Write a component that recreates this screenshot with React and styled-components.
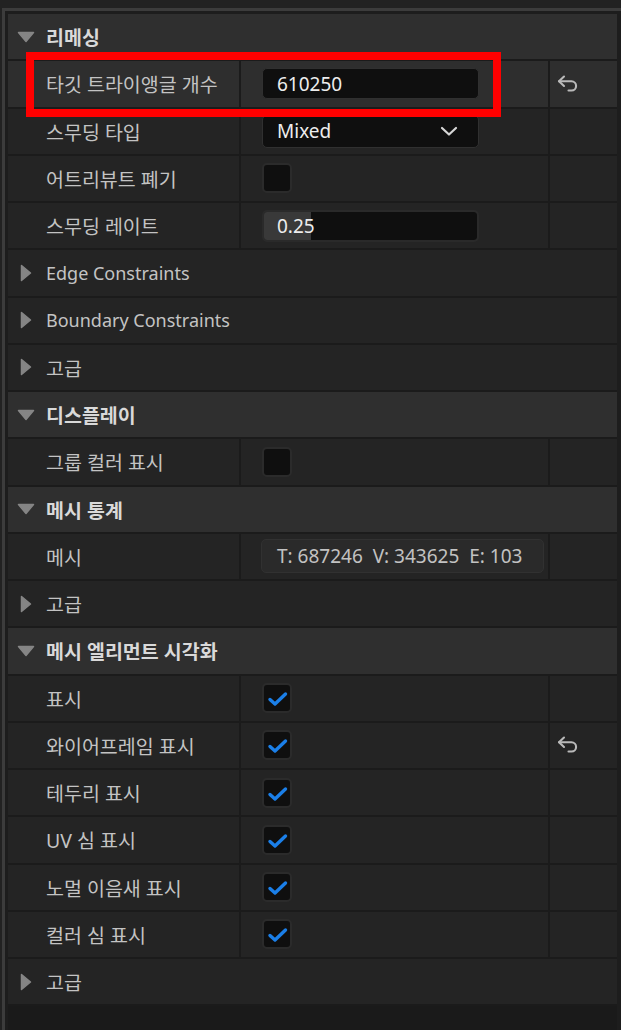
import React from 'react';
import styled, { createGlobalStyle } from 'styled-components';

const GlobalStyle = createGlobalStyle`
  html, body {
    margin: 0;
    padding: 0;
  }
  body {
    background: #222222;
    font-family: "Noto Sans", "Noto Sans CJK KR", sans-serif;
  }
`;

const Page = styled.div`
  box-sizing: border-box;
  width: 621px;
  height: 1030px;
  padding: 8px 0 0 2px;
  background: #222222;
  overflow: hidden;
`;

const Frame = styled.div`
  position: relative;
  box-sizing: border-box;
  height: 100%;
  padding: 3px 4px 0 3px;
  border-top: 3px solid #3c3c3c;
  border-left: 3px solid #3c3c3c;
  background: #1d1d1d;
`;

const Panel = styled.div`
  display: flex;
  flex-direction: column;
  height: 100%;
  background: #1a1a1a;
`;

const Row = styled.div`
  display: flex;
  align-items: stretch;
  flex: none;
  height: 45.25px;
  border-bottom: 2px solid #1b1b1b;
  background: ${p => (p.$header ? '#2f2f2f' : p.$hover ? '#2e2e2e' : '#242424')};
`;

const Toggle = styled.div`
  flex: none;
  width: 35px;
  display: flex;
  align-items: center;
  justify-content: center;
`;

const Title = styled.div`
  display: flex;
  align-items: center;
  margin-left: 3px;
  font-size: 19.5px;
  font-weight: 700;
  color: #d9d9d9;
`;

const GroupLabel = styled.div`
  display: flex;
  align-items: center;
  margin-left: 3px;
  font-size: ${p => (p.$latin ? 18 : 19.5)}px;
  color: #c3c3c3;
`;

const NameCell = styled.div`
  box-sizing: border-box;
  flex: none;
  width: 233px;
  padding-left: 38px;
  display: flex;
  align-items: center;
  border-right: 2px solid #1b1b1b;
  font-size: 19.5px;
  color: #c3c3c3;
  white-space: nowrap;
`;

const ValueCell = styled.div`
  box-sizing: border-box;
  flex: none;
  width: 309px;
  padding-left: 21px;
  display: flex;
  align-items: center;
  border-right: 2px solid #1b1b1b;
`;

const ResetCell = styled.div`
  flex: 1;
  display: flex;
  align-items: center;
  padding-left: 7px;
`;

const Field = styled.div`
  box-sizing: border-box;
  width: 217px;
  height: ${p => p.$h || 31}px;
  display: flex;
  align-items: center;
  justify-content: space-between;
  padding: 0 20px 0 14px;
  border: 1px solid #303030;
  border-radius: 5px;
  background: #0f0f0f;
  font-size: 19px;
  color: #ededed;
`;

const SliderBox = styled.div`
  box-sizing: border-box;
  width: 217px;
  height: 32px;
  display: flex;
  align-items: center;
  padding-left: 13px;
  border: 2px solid #2a2a2a;
  border-radius: 5px;
  background: linear-gradient(90deg, #393939 ${p => p.$fill}%, #0f0f0f ${p => p.$fill}%);
  background-clip: padding-box;
  font-size: 19px;
  color: #ededed;
`;

const StatBox = styled.div`
  box-sizing: border-box;
  width: 283px;
  height: 34px;
  margin-left: -1px;
  display: flex;
  align-items: center;
  padding-left: 15px;
  border: 1px solid #313131;
  border-radius: 5px;
  background: #2a2a2a;
  font-size: 19px;
  color: #c2c2c2;
  white-space: pre;
  overflow: hidden;
`;

const Box = styled.div`
  box-sizing: border-box;
  width: 30px;
  height: 30px;
  display: flex;
  align-items: center;
  justify-content: center;
  border: 2px solid #2b2b2b;
  border-radius: 5px;
  background: #0f0f0f;
`;

const Highlight = styled.div`
  position: absolute;
  left: 21px;
  top: 41px;
  width: 475px;
  height: 65px;
  box-sizing: border-box;
  border: 8px solid #ff0000;
  pointer-events: none;
`;

const DownArrow = () => (
  <svg width="18" height="12" viewBox="0 0 18 12">
    <polygon points="1.5,1.5 16.5,1.5 9,10.5" fill="#858585" stroke="#858585" strokeWidth="1.5" strokeLinejoin="round" />
  </svg>
);

const RightArrow = () => (
  <svg width="12" height="18" viewBox="0 0 12 18">
    <polygon points="1.5,1.5 10.5,9 1.5,16.5" fill="#858585" stroke="#858585" strokeWidth="1.5" strokeLinejoin="round" />
  </svg>
);

const Chevron = () => (
  <svg width="18" height="11" viewBox="0 0 18 11">
    <path d="M2 2 L9 8.5 L16 2" fill="none" stroke="#d6d6d6" strokeWidth="2.2" strokeLinecap="round" strokeLinejoin="round" />
  </svg>
);

const Undo = () => (
  <svg width="23" height="18" viewBox="0 0 23 18">
    <path d="M7 1.5 L2 6.3 L7 11" fill="none" stroke="#b9b9b9" strokeWidth="2.1" strokeLinecap="round" strokeLinejoin="round" />
    <path d="M2 6.3 H14.5 a4.6 4.6 0 0 1 0 9.2 H11.5" fill="none" stroke="#b9b9b9" strokeWidth="2.1" strokeLinecap="round" strokeLinejoin="round" />
  </svg>
);

const Check = () => (
  <svg width="26" height="26" viewBox="0 0 26 26">
    <path d="M6 14.5 L11 19 L21.5 9" fill="none" stroke="#1b7fe8" strokeWidth="3.4" strokeLinecap="round" strokeLinejoin="round" />
  </svg>
);

const Header = ({ title }) => (
  <Row $header>
    <Toggle><DownArrow /></Toggle>
    <Title>{title}</Title>
  </Row>
);

const Group = ({ label, latin }) => (
  <Row>
    <Toggle><RightArrow /></Toggle>
    <GroupLabel $latin={latin}>{label}</GroupLabel>
  </Row>
);

const Prop = ({ label, children, reset, hover }) => (
  <Row $hover={hover}>
    <NameCell>{label}</NameCell>
    <ValueCell>{children}</ValueCell>
    <ResetCell>{reset && <Undo />}</ResetCell>
  </Row>
);

const CheckBox = ({ checked }) => <Box>{checked && <Check />}</Box>;

const visuals = [
  { label: '표시' },
  { label: '와이어프레임 표시', reset: true },
  { label: '테두리 표시' },
  { label: 'UV 심 표시' },
  { label: '노멀 이음새 표시' },
  { label: '컬러 심 표시' },
];

const App = () => (
  <Page>
    <GlobalStyle />
    <Frame>
      <Panel>
        <Header title="리메싱" />
        <Prop label="타깃 트라이앵글 개수" reset hover>
          <Field>610250</Field>
        </Prop>
        <Prop label="스무딩 타입">
          <Field $h={33}>Mixed<Chevron /></Field>
        </Prop>
        <Prop label="어트리뷰트 폐기">
          <CheckBox />
        </Prop>
        <Prop label="스무딩 레이트">
          <SliderBox $fill={22}>0.25</SliderBox>
        </Prop>
        <Group label="Edge Constraints" latin />
        <Group label="Boundary Constraints" latin />
        <Group label="고급" />

        <Header title="디스플레이" />
        <Prop label="그룹 컬러 표시">
          <CheckBox />
        </Prop>

        <Header title="메시 통계" />
        <Prop label="메시">
          <StatBox>{'T: 687246  V: 343625  E: 103'}</StatBox>
        </Prop>
        <Group label="고급" />

        <Header title="메시 엘리먼트 시각화" />
        {visuals.map(v => (
          <Prop key={v.label} label={v.label} reset={v.reset}>
            <CheckBox checked />
          </Prop>
        ))}
        <Group label="고급" />
      </Panel>
      <Highlight />
    </Frame>
  </Page>
);

export default App;
